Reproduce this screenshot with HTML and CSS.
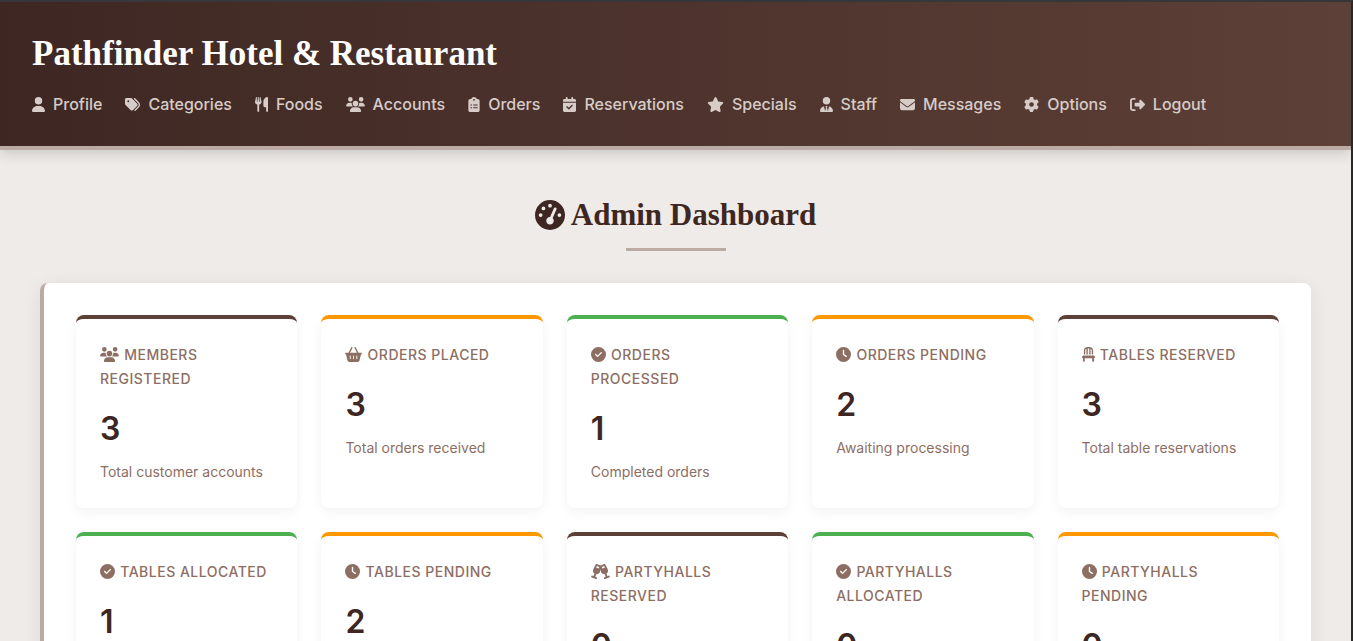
FILE: index.html
```html
<!DOCTYPE html>
<html lang="en">
<head>
<meta charset="utf-8">
<meta name="viewport" content="width=device-width, initial-scale=1">
<title>Admin Dashboard</title>
<link rel="stylesheet" href="styles.css">
</head>
<body>
<svg class="sprite" aria-hidden="true">
<symbol id="user" viewBox="0 0 448 512"><path d="M224 256A128 128 0 1 0 224 0a128 128 0 1 0 0 256zm-45.7 48C79.8 304 0 383.8 0 482.3C0 498.7 13.3 512 29.7 512H418.3c16.4 0 29.7-13.3 29.7-29.7C448 383.8 368.2 304 269.7 304H178.3z"/></symbol>
<symbol id="tags" viewBox="0 0 512 512"><path d="M345 39.1L472.8 168.4c52.4 53 52.4 138.2 0 191.2L360.8 472.9c-9.3 9.4-24.5 9.5-33.9 .2s-9.5-24.5-.2-33.9L438.6 325.9c33.9-34.3 33.9-89.4 0-123.7L310.9 72.9c-9.3-9.4-9.2-24.6 .2-33.9s24.6-9.2 33.9 .2zM0 229.5V80C0 53.5 21.5 32 48 32H197.5c17 0 33.3 6.7 45.3 18.7l168 168c25 25 25 65.5 0 90.5L277.3 442.7c-25 25-65.5 25-90.5 0l-168-168C6.7 262.7 0 246.5 0 229.5zM144 144a32 32 0 1 0 -64 0 32 32 0 1 0 64 0z"/></symbol>
<symbol id="utensils" viewBox="0 0 448 512"><path d="M416 0C400 0 288 32 288 176V288c0 35.3 28.7 64 64 64h32V480c0 17.7 14.3 32 32 32s32-14.3 32-32V352 240 32c0-17.7-14.3-32-32-32zM64 16C64 7.8 57.9 1 49.7 .1S34.2 4.6 32.4 12.5L2.1 148.8C.7 155.1 0 161.5 0 167.9c0 45.9 35.1 83.6 80 87.7V480c0 17.7 14.3 32 32 32s32-14.3 32-32V255.6c44.9-4.1 80-41.8 80-87.7c0-6.4-.7-12.8-2.1-19.1L191.6 12.5c-1.8-8-9.3-13.3-17.4-12.4S160 7.8 160 16V150.2c0 5.4-4.4 9.8-9.8 9.8c-5.1 0-9.3-3.9-9.8-9L127.9 14.6C127.2 6.3 120.3 0 112 0s-15.2 6.3-15.9 14.6L83.7 151c-.5 5.1-4.7 9-9.8 9c-5.4 0-9.8-4.4-9.8-9.8V16z"/></symbol>
<symbol id="users" viewBox="0 0 640 512"><path d="M144 0a80 80 0 1 1 0 160A80 80 0 1 1 144 0zM512 0a80 80 0 1 1 0 160A80 80 0 1 1 512 0zM0 298.7C0 239.8 47.8 192 106.7 192h42.7c15.9 0 31 3.5 44.6 9.7c-1.3 7.2-1.9 14.7-1.9 22.3c0 38.2 16.8 72.5 43.3 96H21.3C9.6 320 0 310.4 0 298.7zM405.3 320h-.7c26.6-23.5 43.3-57.8 43.3-96c0-7.6-.7-15-1.9-22.3c13.6-6.3 28.7-9.7 44.6-9.7h42.7C592.2 192 640 239.8 640 298.7c0 11.8-9.6 21.3-21.3 21.3H405.3zM224 224a96 96 0 1 1 192 0 96 96 0 1 1-192 0zM128 485.3C128 411.7 187.7 352 261.3 352H378.7C452.3 352 512 411.7 512 485.3c0 14.7-11.9 26.7-26.7 26.7H154.7c-14.7 0-26.7-11.9-26.7-26.7z"/></symbol>
<symbol id="clipboard" viewBox="0 0 384 512"><path d="M192 0c-41.8 0-77.4 26.7-90.5 64H64C28.7 64 0 92.7 0 128V448c0 35.3 28.7 64 64 64H320c35.3 0 64-28.7 64-64V128c0-35.3-28.7-64-64-64H282.5C269.4 26.7 233.8 0 192 0zm0 64a32 32 0 1 1 0 64 32 32 0 1 1 0-64zM72 272a24 24 0 1 1 48 0 24 24 0 1 1-48 0zm104-16H304c8.8 0 16 7.2 16 16s-7.2 16-16 16H176c-8.8 0-16-7.2-16-16s7.2-16 16-16zM72 368a24 24 0 1 1 48 0 24 24 0 1 1-48 0zm88 0c0-8.8 7.2-16 16-16H304c8.8 0 16 7.2 16 16s-7.2 16-16 16H176c-8.8 0-16-7.2-16-16z"/></symbol>
<symbol id="calendar" viewBox="0 0 448 512"><path d="M128 0c17.7 0 32 14.3 32 32V64H288V32c0-17.7 14.3-32 32-32s32 14.3 32 32V64h48c26.5 0 48 21.5 48 48v48H0V112C0 85.5 21.5 64 48 64H96V32c0-17.7 14.3-32 32-32zM0 192H448V464c0 26.5-21.5 48-48 48H48c-26.5 0-48-21.5-48-48V192zM329 305c9.4-9.4 9.4-24.6 0-33.9s-24.6-9.4-33.9 0l-95 95-47-47c-9.4-9.4-24.6-9.4-33.9 0s-9.4 24.6 0 33.9l64 64c9.4 9.4 24.6 9.4 33.9 0L329 305z"/></symbol>
<symbol id="star" viewBox="0 0 576 512"><path d="M316.9 18C311.6 7 300.4 0 288.1 0s-23.4 7-28.8 18L195 150.3 51.4 171.5c-12 1.8-22 10.2-25.7 21.7s-.7 24.2 7.9 32.7L137.8 329 113.2 474.7c-2 12 3 24.2 12.9 31.3s23 8 33.8 2.3l128.3-68.5 128.3 68.5c10.8 5.7 23.9 4.9 33.8-2.3s14.9-19.3 12.9-31.3L438.5 329 542.7 225.9c8.6-8.5 11.7-21.2 7.9-32.7s-13.7-19.9-25.7-21.7L381.2 150.3 316.9 18z"/></symbol>
<symbol id="user-tie" viewBox="0 0 448 512"><path d="M96 128a128 128 0 1 0 256 0A128 128 0 1 0 96 128zm94.5 200.2l18.6 31L175.8 483.1l-36-146.9c-2-8.1-9.8-13.4-17.9-11.3C51.9 342.4 0 405.8 0 481.3c0 17 13.8 30.7 30.7 30.7H162.5h123H417.3c17 0 30.7-13.8 30.7-30.7c0-75.5-51.9-138.9-121.9-156.4c-8.1-2-15.9 3.3-17.9 11.3l-36 146.9L238.9 359.2l18.6-31c6.4-10.7-1.3-24.2-13.7-24.2H224 204.3c-12.4 0-20.1 13.6-13.7 24.2z"/></symbol>
<symbol id="envelope" viewBox="0 0 512 512"><path d="M48 64C21.5 64 0 85.5 0 112c0 15.1 7.1 29.3 19.2 38.4L236.8 313.6c11.4 8.5 27 8.5 38.4 0L492.8 150.4c12.1-9.1 19.2-23.3 19.2-38.4c0-26.5-21.5-48-48-48H48zM0 176V384c0 35.3 28.7 64 64 64H448c35.3 0 64-28.7 64-64V176L294.4 339.2c-22.8 17.1-54 17.1-76.8 0L0 176z"/></symbol>
<symbol id="gear" viewBox="0 0 512 512"><path d="M495.9 166.6c3.2 8.7 .5 18.4-6.4 24.6l-43.3 39.4c1.1 8.3 1.7 16.8 1.7 25.4s-.6 17.1-1.7 25.4l43.3 39.4c6.9 6.2 9.6 15.9 6.4 24.6c-4.4 11.9-9.7 23.3-15.8 34.3l-4.7 8.1c-6.6 11-14 21.4-22.1 31.2c-5.9 7.2-15.7 9.6-24.5 6.8l-55.7-17.7c-13.4 10.3-28.2 18.9-44 25.4l-12.5 57.1c-2 9.1-9 16.3-18.2 17.8c-13.8 2.3-28 3.5-42.5 3.5s-28.7-1.2-42.5-3.5c-9.2-1.5-16.2-8.7-18.2-17.8l-12.5-57.1c-15.8-6.5-30.6-15.1-44-25.4L83.1 425.9c-8.8 2.8-18.6 .3-24.5-6.8c-8.1-9.8-15.5-20.2-22.1-31.2l-4.7-8.1c-6.1-11-11.4-22.4-15.8-34.3c-3.2-8.7-.5-18.4 6.4-24.6l43.3-39.4C64.6 273.1 64 264.6 64 256s.6-17.1 1.7-25.4L22.4 191.2c-6.9-6.2-9.6-15.9-6.4-24.6c4.4-11.9 9.7-23.3 15.8-34.3l4.7-8.1c6.6-11 14-21.4 22.1-31.2c5.9-7.2 15.7-9.6 24.5-6.8l55.7 17.7c13.4-10.3 28.2-18.9 44-25.4l12.5-57.1c2-9.1 9-16.3 18.2-17.8C227.3 1.2 241.5 0 256 0s28.7 1.2 42.5 3.5c9.2 1.5 16.2 8.7 18.2 17.8l12.5 57.1c15.8 6.5 30.6 15.1 44 25.4l55.7-17.7c8.8-2.8 18.6-.3 24.5 6.8c8.1 9.8 15.5 20.2 22.1 31.2l4.7 8.1c6.1 11 11.4 22.4 15.8 34.3zM256 336a80 80 0 1 0 0-160 80 80 0 1 0 0 160z"/></symbol>
<symbol id="logout" viewBox="0 0 512 512"><path d="M377.9 105.9L500.7 228.7c7.2 7.2 11.3 17.1 11.3 27.3s-4.1 20.1-11.3 27.3L377.9 406.1c-6.4 6.4-15 9.9-24 9.9c-18.7 0-33.9-15.2-33.9-33.9l0-62.1-128 0c-17.7 0-32-14.3-32-32l0-64c0-17.7 14.3-32 32-32l128 0 0-62.1c0-18.7 15.2-33.9 33.9-33.9c9 0 17.6 3.6 24 9.9zM160 96L96 96c-17.7 0-32 14.3-32 32l0 256c0 17.7 14.3 32 32 32l64 0c17.7 0 32 14.3 32 32s-14.3 32-32 32l-64 0c-53 0-96-43-96-96L0 128C0 75 43 32 96 32l64 0c17.7 0 32 14.3 32 32s-14.3 32-32 32z"/></symbol>
<symbol id="gauge" viewBox="0 0 512 512"><path d="M0 256a256 256 0 1 1 512 0A256 256 0 1 1 0 256zM288 96a32 32 0 1 0 -64 0 32 32 0 1 0 64 0zM256 416c35.3 0 64-28.7 64-64c0-17.4-6.9-33.1-18.1-44.6L366 161.7c5.3-12.1-.2-26.3-12.3-31.6s-26.3 .2-31.6 12.3L257.9 288c-.6 0-1.3 0-1.9 0c-35.3 0-64 28.7-64 64s28.7 64 64 64zM176 144a32 32 0 1 0 -64 0 32 32 0 1 0 64 0zM96 288a32 32 0 1 0 0-64 32 32 0 1 0 0 64zm352-32a32 32 0 1 0 -64 0 32 32 0 1 0 64 0z"/></symbol>
<symbol id="basket" viewBox="0 0 576 512"><path d="M253.3 35.1c6.1-11.8 1.5-26.3-10.2-32.4s-26.3-1.5-32.4 10.2L117.6 192H32c-17.7 0-32 14.3-32 32s14.3 32 32 32L83.9 463.5C91 492 116.6 512 146 512H430c29.4 0 55-20 62.1-48.5L544 256c17.7 0 32-14.3 32-32s-14.3-32-32-32H458.4L365.3 12.9C359.2 1.2 344.7-3.4 332.9 2.7s-16.3 20.6-10.2 32.4L404.3 192H171.7L253.3 35.1zM192 304v96c0 8.8-7.2 16-16 16s-16-7.2-16-16V304c0-8.8 7.2-16 16-16s16 7.2 16 16zm96-16c8.8 0 16 7.2 16 16v96c0 8.8-7.2 16-16 16s-16-7.2-16-16V304c0-8.8 7.2-16 16-16zm128 16v96c0 8.8-7.2 16-16 16s-16-7.2-16-16V304c0-8.8 7.2-16 16-16s16 7.2 16 16z"/></symbol>
<symbol id="check" viewBox="0 0 512 512"><path d="M256 512A256 256 0 1 0 256 0a256 256 0 1 0 0 512zM369 209L241 337c-9.4 9.4-24.6 9.4-33.9 0l-64-64c-9.4-9.4-9.4-24.6 0-33.9s24.6-9.4 33.9 0l47 47L335 175c9.4-9.4 24.6-9.4 33.9 0s9.4 24.6 0 33.9z"/></symbol>
<symbol id="clock" viewBox="0 0 512 512"><path d="M256 0a256 256 0 1 1 0 512A256 256 0 1 1 256 0zM232 120V256c0 8 4 15.5 10.7 20l96 64c11 7.4 25.9 4.4 33.3-6.7s4.4-25.9-6.7-33.3L280 243.2V120c0-13.3-10.7-24-24-24s-24 10.7-24 24z"/></symbol>
<symbol id="chair" viewBox="0 0 448 512"><path d="M248 48V256h48V58.7c23.9 13.8 40 39.7 40 69.3V256h48V128C384 57.3 326.7 0 256 0H192C121.3 0 64 57.3 64 128V256h48V128c0-29.6 16.1-55.5 40-69.3V256h48V48h48zM48 288c-12.1 0-23.2 6.8-28.6 17.7l-16 32c-5 9.9-4.4 21.7 1.4 31.1S20.9 384 32 384l0 96c0 17.7 14.3 32 32 32s32-14.3 32-32V384H352v96c0 17.7 14.3 32 32 32s32-14.3 32-32V384c11.1 0 21.4-5.7 27.2-15.2s6.4-21.2 1.4-31.1l-16-32C423.2 294.8 412.1 288 400 288H48z"/></symbol>
<symbol id="glasses" viewBox="0 0 640 512"><path d="M155.6 17.3C163 3 179.9-3.6 195 1.9L320 47.5l125-45.6c15.1-5.5 32 1.1 39.4 15.4l78.8 152.9c28.8 55.8 10.3 122.3-38.5 156.6L556.1 413l41-15c16.6-6 35 2.5 41 19.1s-2.5 35-19.1 41l-71.1 25.9L476.8 510c-16.6 6.1-35-2.5-41-19.1s2.5-35 19.1-41l41-15-31.3-86.2c-59.4 5.2-116.2-34-130-95.2L320 188.8l-14.6 64.7c-13.8 61.3-70.6 100.4-130 95.2l-31.3 86.2 41 15c16.6 6 25.2 24.4 19.1 41s-24.4 25.2-41 19.1L92.2 484.1 21.1 458.2c-16.6-6.1-25.2-24.4-19.1-41s24.4-25.2 41-19.1l41 15 31.3-86.2C66.5 292.5 48.1 226 76.9 170.2L155.6 17.3zm44 54.4l-27.2 52.8L261.6 157l13.1-57.9L199.6 71.7zm240.9 0L365.4 99.1 378.5 157l89.2-32.5L440.5 71.7z"/></symbol>
</svg>

<header class="header">
  <h1 class="brand">Pathfinder Hotel &amp; Restaurant</h1>
  <nav class="nav">
    <a class="nav-link" href="#"><svg class="icon w13"><use href="#user"/></svg>Profile</a>
    <a class="nav-link" href="#"><svg class="icon w15"><use href="#tags"/></svg>Categories</a>
    <a class="nav-link" href="#"><svg class="icon w13"><use href="#utensils"/></svg>Foods</a>
    <a class="nav-link" href="#"><svg class="icon w19"><use href="#users"/></svg>Accounts</a>
    <a class="nav-link" href="#"><svg class="icon w12"><use href="#clipboard"/></svg>Orders</a>
    <a class="nav-link" href="#"><svg class="icon w13"><use href="#calendar"/></svg>Reservations</a>
    <a class="nav-link" href="#"><svg class="icon w17"><use href="#star"/></svg>Specials</a>
    <a class="nav-link" href="#"><svg class="icon w13"><use href="#user-tie"/></svg>Staff</a>
    <a class="nav-link" href="#"><svg class="icon w15"><use href="#envelope"/></svg>Messages</a>
    <a class="nav-link" href="#"><svg class="icon w15"><use href="#gear"/></svg>Options</a>
    <a class="nav-link" href="#"><svg class="icon w15"><use href="#logout"/></svg>Logout</a>
  </nav>
</header>

<main class="main">
  <h2 class="page-title"><svg class="title-icon"><use href="#gauge"/></svg>Admin Dashboard</h2>
  <section class="panel">
    <article class="card">
      <h3 class="card-title"><svg class="icon w19"><use href="#users"/></svg> Members Registered</h3>
      <p class="value">3</p>
      <p class="note">Total customer accounts</p>
    </article>
    <article class="card pending">
      <h3 class="card-title"><svg class="icon w17"><use href="#basket"/></svg> Orders Placed</h3>
      <p class="value">3</p>
      <p class="note">Total orders received</p>
    </article>
    <article class="card done">
      <h3 class="card-title"><svg class="icon w15"><use href="#check"/></svg> Orders<br>Processed</h3>
      <p class="value">1</p>
      <p class="note">Completed orders</p>
    </article>
    <article class="card pending">
      <h3 class="card-title"><svg class="icon w15"><use href="#clock"/></svg> Orders Pending</h3>
      <p class="value">2</p>
      <p class="note">Awaiting processing</p>
    </article>
    <article class="card">
      <h3 class="card-title"><svg class="icon w13"><use href="#chair"/></svg> Tables Reserved</h3>
      <p class="value">3</p>
      <p class="note">Total table reservations</p>
    </article>
    <article class="card done">
      <h3 class="card-title"><svg class="icon w15"><use href="#check"/></svg> Tables Allocated</h3>
      <p class="value">1</p>
    </article>
    <article class="card pending">
      <h3 class="card-title"><svg class="icon w15"><use href="#clock"/></svg> Tables Pending</h3>
      <p class="value">2</p>
    </article>
    <article class="card">
      <h3 class="card-title"><svg class="icon w19"><use href="#glasses"/></svg> Partyhalls Reserved</h3>
      <p class="value">0</p>
    </article>
    <article class="card done">
      <h3 class="card-title"><svg class="icon w15"><use href="#check"/></svg> Partyhalls Allocated</h3>
      <p class="value">0</p>
    </article>
    <article class="card pending">
      <h3 class="card-title"><svg class="icon w15"><use href="#clock"/></svg> Partyhalls Pending</h3>
      <p class="value">0</p>
    </article>
  </section>
</main>
</body>
</html>
```
FILE: styles.css
```css
* { box-sizing: border-box; margin: 0; padding: 0; }

body {
  min-height: 100vh;
  border-top: 2px solid #35373a;
  border-right: 2px solid #262829;
  background: #efebe8;
  color: #3e2723;
  font-family: Inter, "Liberation Sans", sans-serif;
}

html { scrollbar-width: none; }

.sprite { display: none; }

.header {
  padding: 24px 32px 29px;
  border-bottom: 4px solid #bcaaa4;
  background: linear-gradient(90deg, #3e2723, #5d4037);
  box-shadow: 0 4px 12px rgba(0, 0, 0, 0.15);
}

.brand {
  color: #fff;
  font: bold 35px/56px "Liberation Serif", serif;
}

.nav {
  display: flex;
  flex-wrap: wrap;
  gap: 8px 23px;
  margin-top: 9px;
}

.nav-link {
  display: flex;
  align-items: center;
  gap: 8px;
  color: #d7ccc8;
  font-size: 16px;
  font-weight: 500;
  line-height: 26px;
  text-decoration: none;
}

.icon {
  flex: none;
  height: 15px;
  fill: currentColor;
  vertical-align: -2px;
}

.w12 { width: 12px; }
.w13 { width: 13px; }
.w15 { width: 15px; }
.w17 { width: 17px; }
.w19 { width: 19px; }

.main { padding: 40px 40px 64px; }

.page-title {
  display: flex;
  justify-content: center;
  align-items: center;
  flex-wrap: wrap;
  column-gap: 6px;
  margin-bottom: 32px;
  font: bold 31px/50px "Liberation Serif", serif;
}

.page-title::after {
  content: "";
  flex: 0 0 100%;
  height: 3px;
  margin-top: 8px;
  background: linear-gradient(#bcaaa4, #bcaaa4) center / 100px 3px no-repeat;
}

.title-icon {
  width: 30px;
  height: 30px;
  fill: currentColor;
}

.panel {
  display: grid;
  grid-template-columns: repeat(auto-fit, minmax(220px, 1fr));
  gap: 24px;
  padding: 32px;
  border-left: 4px solid #bcaaa4;
  border-radius: 8px;
  background: #fff;
  box-shadow: 0 4px 20px rgba(0, 0, 0, 0.08);
}

.card {
  min-height: 193px;
  padding: 24px;
  border-top: 4px solid #5d4037;
  border-radius: 8px;
  background: #fff;
  box-shadow: 0 4px 12px rgba(0, 0, 0, 0.05);
}

.pending { border-top-color: #ff9800; }
.done { border-top-color: #4caf50; }

.card-title {
  color: #8d6e63;
  font-size: 14px;
  font-weight: 500;
  line-height: 24px;
  letter-spacing: 0.5px;
  text-transform: uppercase;
}

.card-title .icon { margin-right: 1px; }

.value {
  margin: 12px 0 6px;
  font-size: 32px;
  font-weight: 600;
  line-height: 51px;
}

.note {
  color: #8d6e63;
  font-size: 14px;
  line-height: 24px;
}
```
